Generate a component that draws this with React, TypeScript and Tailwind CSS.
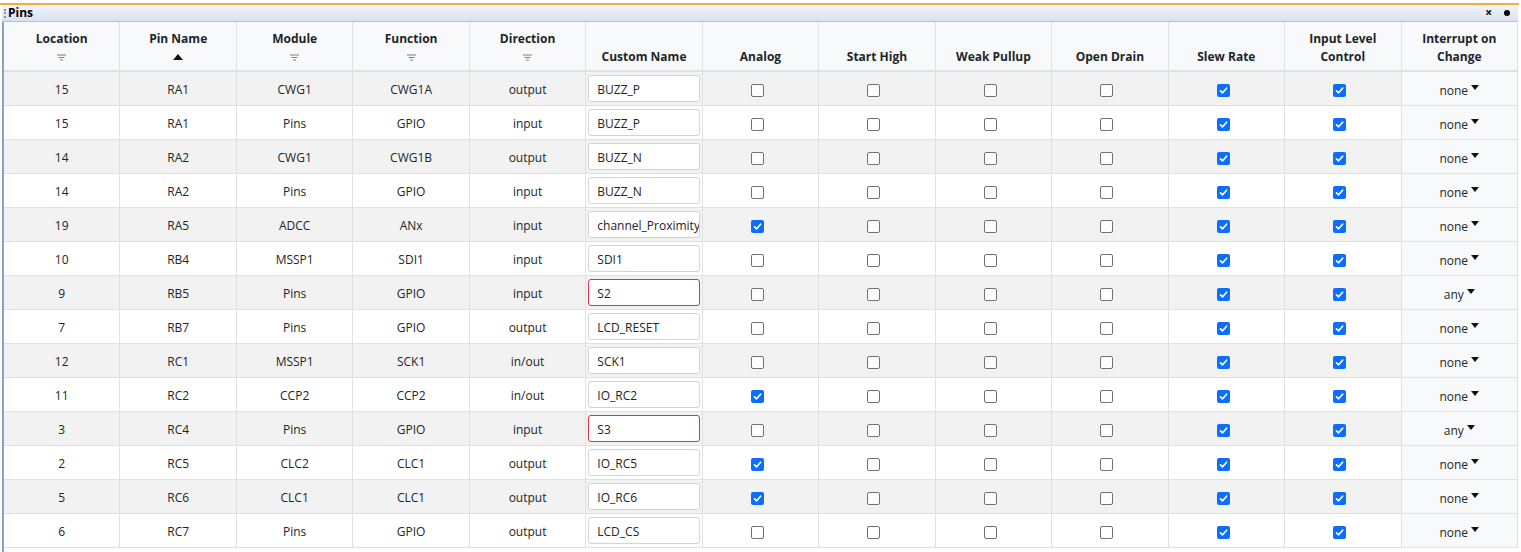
import React from "react";

type Row = {
  loc: string; pin: string; mod: string; fn: string; dir: string; name: string;
  analog?: boolean; invalid?: boolean; ioc: string;
};

const rows: Row[] = [
  { loc: "15", pin: "RA1", mod: "CWG1", fn: "CWG1A", dir: "output", name: "BUZZ_P", ioc: "none" },
  { loc: "15", pin: "RA1", mod: "Pins", fn: "GPIO", dir: "input", name: "BUZZ_P", ioc: "none" },
  { loc: "14", pin: "RA2", mod: "CWG1", fn: "CWG1B", dir: "output", name: "BUZZ_N", ioc: "none" },
  { loc: "14", pin: "RA2", mod: "Pins", fn: "GPIO", dir: "input", name: "BUZZ_N", ioc: "none" },
  { loc: "19", pin: "RA5", mod: "ADCC", fn: "ANx", dir: "input", name: "channel_Proximity", analog: true, ioc: "none" },
  { loc: "10", pin: "RB4", mod: "MSSP1", fn: "SDI1", dir: "input", name: "SDI1", ioc: "none" },
  { loc: "9", pin: "RB5", mod: "Pins", fn: "GPIO", dir: "input", name: "S2", invalid: true, ioc: "any" },
  { loc: "7", pin: "RB7", mod: "Pins", fn: "GPIO", dir: "output", name: "LCD_RESET", ioc: "none" },
  { loc: "12", pin: "RC1", mod: "MSSP1", fn: "SCK1", dir: "in/out", name: "SCK1", ioc: "none" },
  { loc: "11", pin: "RC2", mod: "CCP2", fn: "CCP2", dir: "in/out", name: "IO_RC2", analog: true, ioc: "none" },
  { loc: "3", pin: "RC4", mod: "Pins", fn: "GPIO", dir: "input", name: "S3", invalid: true, ioc: "any" },
  { loc: "2", pin: "RC5", mod: "CLC2", fn: "CLC1", dir: "output", name: "IO_RC5", analog: true, ioc: "none" },
  { loc: "5", pin: "RC6", mod: "CLC1", fn: "CLC1", dir: "output", name: "IO_RC6", analog: true, ioc: "none" },
  { loc: "6", pin: "RC7", mod: "Pins", fn: "GPIO", dir: "output", name: "LCD_CS", ioc: "none" },
];

function FilterIcon() {
  return (
    <svg width="9" height="7" viewBox="0 0 9 7" className="block">
      <rect x="0" y="0.5" width="9" height="1" fill="#7a7f85" />
      <rect x="1.5" y="3" width="6" height="1" fill="#7a7f85" />
      <rect x="3" y="5.5" width="3" height="1" fill="#7a7f85" />
    </svg>
  );
}

function SortUp() {
  return (
    <svg width="10" height="6" viewBox="0 0 10 6" className="block">
      <path d="M0 6 L5 0 L10 6 Z" fill="#111" />
    </svg>
  );
}

function Check({ on }: { on?: boolean }) {
  if (on) {
    return (
      <span className="inline-flex w-[13px] h-[13px] rounded-[2px] bg-[#0d6efd] items-center justify-center">
        <svg width="9" height="9" viewBox="0 0 9 9">
          <path d="M1.5 4.8 L3.6 6.8 L7.6 2.2" stroke="#fff" strokeWidth="1.7" fill="none" strokeLinecap="round" strokeLinejoin="round" />
        </svg>
      </span>
    );
  }
  return <span className="inline-block w-[13px] h-[13px] rounded-[2px] border border-[#6f7377] bg-white" />;
}

const headers: { l1?: string; l2: string; icon?: "filter" | "sort" }[] = [
  { l1: "Location", l2: "", icon: "filter" },
  { l1: "Pin Name", l2: "", icon: "sort" },
  { l1: "Module", l2: "", icon: "filter" },
  { l1: "Function", l2: "", icon: "filter" },
  { l1: "Direction", l2: "", icon: "filter" },
  { l2: "Custom Name" },
  { l2: "Analog" },
  { l2: "Start High" },
  { l2: "Weak Pullup" },
  { l2: "Open Drain" },
  { l2: "Slew Rate" },
  { l1: "Input Level", l2: "Control" },
  { l1: "Interrupt on", l2: "Change" },
];

export default function App() {
  return (
    <div className="w-[1521px] h-[552px] bg-white overflow-hidden text-[12px] text-[#212529] font-['Segoe_UI','Open_Sans','Noto_Sans',sans-serif]">
      <div className="h-[3px] bg-white" />
      <div className="h-[2px] bg-[#f4ad3d] mr-[2px]" />
      <div className="h-[17px] mr-[3px] ml-[2px] flex items-center bg-gradient-to-b from-[#f1f4fb] to-[#d9e1f2] border-b border-[#b3c2dd]">
        <div className="w-[2px] h-[9px] ml-[2px] mr-[2px] border-l-2 border-dotted border-[#8a8f99]" />
        <span className="font-bold text-[12px] leading-none text-black">Pins</span>
        <div className="flex-1" />
        <span className="font-bold text-[12px] leading-none text-black mr-[12px]">×</span>
        <span className="w-[6px] h-[6px] rounded-full bg-black mr-[8px]" />
      </div>
      <div className="flex">
        <div className="w-[2px] ml-[2px] bg-[#86a3cf] h-[530px]" />
        <div className="w-[1514px]">
          <div className="grid grid-cols-[repeat(13,minmax(0,1fr))] bg-[#f8f9fa] border-b-2 border-[#dee2e6]">
            {headers.map((h, i) => (
              <div key={i} className="h-[48px] border-r border-[#dee2e6] flex flex-col items-center justify-end pb-[4px] font-bold leading-[18px] text-center">
                {h.l1 !== undefined && h.l2 === "" ? (
                  <>
                    <div>{h.l1}</div>
                    <div className="h-[18px] flex items-center justify-center">
                      {h.icon === "filter" ? <FilterIcon /> : <SortUp />}
                    </div>
                  </>
                ) : (
                  <>
                    {h.l1 && <div>{h.l1}</div>}
                    <div>{h.l2}</div>
                  </>
                )}
              </div>
            ))}
          </div>
          {rows.map((r, i) => {
            const bg = i % 2 === 0 ? "bg-[#f2f2f2]" : "bg-white";
            const cell = "h-[33px] pt-[3px] border-r border-[#dee2e6] flex items-center justify-center";
            return (
              <div key={i} className={`grid grid-cols-[repeat(13,minmax(0,1fr))] border-b border-[#dee2e6] ${bg}`}>
                <div className={cell}>{r.loc}</div>
                <div className={cell}>{r.pin}</div>
                <div className={cell}>{r.mod}</div>
                <div className={cell}>{r.fn}</div>
                <div className={cell}>{r.dir}</div>
                <div className="h-[33px] border-r border-[#dee2e6] flex items-center px-[2px]">
                  <div className={`w-full h-[27px] rounded-[3px] bg-white border flex items-center pl-[8px] pt-[2px] overflow-hidden whitespace-nowrap ${r.invalid ? "border-[#dc3545]" : "border-[#ced4da]"}`}>
                    {r.name}
                  </div>
                </div>
                <div className={`${cell} pr-[6px]`}><Check on={r.analog} /></div>
                <div className={`${cell} pr-[6px]`}><Check /></div>
                <div className={`${cell} pr-[6px]`}><Check /></div>
                <div className={`${cell} pr-[6px]`}><Check /></div>
                <div className={`${cell} pr-[6px]`}><Check on /></div>
                <div className={`${cell} pr-[6px]`}><Check on /></div>
                <div className={`${cell} bg-[#f8f9fa]`}>
                  <span className="pt-[2px]">{r.ioc}</span>
                  <span className="inline-block w-0 h-0 ml-[3px] mb-[6px] border-t-[5px] border-t-[#111] border-x-[4.5px] border-x-transparent" />
                </div>
              </div>
            );
          })}
        </div>
      </div>
    </div>
  );
}
